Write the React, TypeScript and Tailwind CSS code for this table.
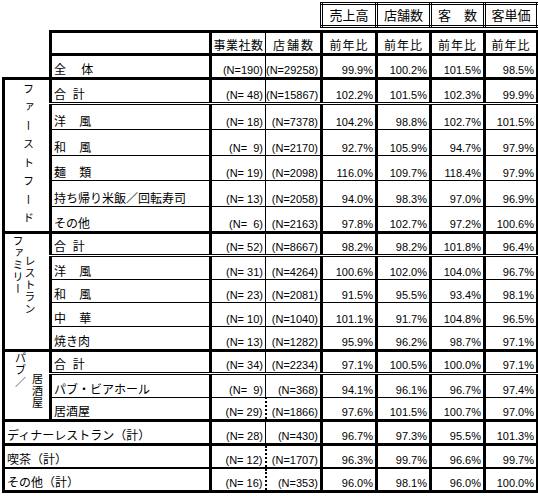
type Row = {
  label: string;
  n: string;
  s: string;
  p: [string, string, string, string];
  b: "thin" | "double" | "thick" | "mid";
  dot?: boolean;
};

const B = {
  thin: "border-b",
  double: "border-b-[3px] [border-bottom-style:double]",
  thick: "border-b-[3px]",
  mid: "border-b-2",
};

const fastFood: Row[] = [
  { label: "合  計", n: "(N= 48)", s: "(N=15867)", p: ["102.2%", "101.5%", "102.3%", "99.9%"], b: "double" },
  { label: "洋    風", n: "(N= 18)", s: "(N=7378)", p: ["104.2%", "98.8%", "102.7%", "101.5%"], b: "thin" },
  { label: "和    風", n: "(N=  9)", s: "(N=2170)", p: ["92.7%", "105.9%", "94.7%", "97.9%"], b: "thin" },
  { label: "麺    類", n: "(N= 19)", s: "(N=2098)", p: ["116.0%", "109.7%", "118.4%", "97.9%"], b: "thin" },
  { label: "持ち帰り米飯／回転寿司", n: "(N= 13)", s: "(N=2058)", p: ["94.0%", "98.3%", "97.0%", "96.9%"], b: "thin" },
  { label: "その他", n: "(N=  6)", s: "(N=2163)", p: ["97.8%", "102.7%", "97.2%", "100.6%"], b: "thick" },
];

const family: Row[] = [
  { label: "合  計", n: "(N= 52)", s: "(N=8667)", p: ["98.2%", "98.2%", "101.8%", "96.4%"], b: "double" },
  { label: "洋    風", n: "(N= 31)", s: "(N=4264)", p: ["100.6%", "102.0%", "104.0%", "96.7%"], b: "thin" },
  { label: "和    風", n: "(N= 23)", s: "(N=2081)", p: ["91.5%", "95.5%", "93.4%", "98.1%"], b: "thin" },
  { label: "中    華", n: "(N= 10)", s: "(N=1040)", p: ["101.1%", "91.7%", "104.8%", "96.5%"], b: "thin" },
  { label: "焼き肉", n: "(N= 13)", s: "(N=1282)", p: ["95.9%", "96.2%", "98.7%", "97.1%"], b: "thick" },
];

const pub: Row[] = [
  { label: "合  計", n: "(N= 34)", s: "(N=2234)", p: ["97.1%", "100.5%", "100.0%", "97.1%"], b: "double" },
  { label: "パブ・ビアホール", n: "(N=  9)", s: "(N=368)", p: ["94.1%", "96.1%", "96.7%", "97.4%"], b: "thin" },
  { label: "居酒屋", n: "(N= 29)", s: "(N=1866)", p: ["97.6%", "101.5%", "100.7%", "97.0%"], b: "thick", dot: true },
];

const others: Row[] = [
  { label: "ディナーレストラン（計）", n: "(N= 28)", s: "(N=430)", p: ["96.7%", "97.3%", "95.5%", "101.3%"], b: "thick" },
  { label: "喫茶（計）", n: "(N= 12)", s: "(N=1707)", p: ["96.3%", "99.7%", "96.6%", "99.7%"], b: "mid", dot: true },
  { label: "その他（計）", n: "(N= 16)", s: "(N=353)", p: ["96.0%", "98.1%", "96.0%", "100.0%"], b: "thick", dot: true },
];

const num = "text-right align-bottom pb-[1px] pr-[2px] whitespace-pre text-[11px] leading-none";

function Cells({ r, wide }: { r: Row; wide?: boolean }) {
  const b = B[r.b];
  return (
    <>
      <td
        colSpan={wide ? 2 : 1}
        className={`border-l-[3px] border-r-[3px] pl-[2px] pb-[1px] align-bottom text-left whitespace-pre text-[12px] leading-none ${b}`}
      >
        {r.label}
      </td>
      <td className={`${num} ${b} ${r.dot ? "border-r-2 [border-right-style:dotted]" : "border-r"}`}>{r.n}</td>
      <td className={`${num} ${b} border-r-[3px]`}>{r.s}</td>
      {r.p.map((v, i) => (
        <td key={i} className={`${num} ${b} border-r-[3px]`}>
          {v}
        </td>
      ))}
    </>
  );
}

const vert = "[writing-mode:vertical-rl] text-[11px] leading-none";
const rowH = "h-[23.6px]";

export default function App() {
  return (
    <div className="w-[538px] h-[498px] bg-white overflow-hidden pt-[2px] pl-[2px] text-black font-['Liberation_Sans','Noto_Sans_CJK_JP',sans-serif]">
      <table className="table-fixed border-collapse w-[534px]">
        <colgroup>
          <col className="w-[47px]" />
          <col className="w-[160px]" />
          <col className="w-[55px]" />
          <col className="w-[56px]" />
          <col className="w-[55px]" />
          <col className="w-[54px]" />
          <col className="w-[54px]" />
          <col className="w-[53px]" />
        </colgroup>
        <tbody>
          <tr className="h-[23px]">
            <td colSpan={4} />
            {["売上高", "店舗数", "客　数", "客単価"].map((t) => (
              <td key={t} className="border-[3px] border-double text-center align-middle text-[13px] leading-none whitespace-pre">
                {t}
              </td>
            ))}
          </tr>
          <tr className="h-[5px]">
            <td colSpan={8} />
          </tr>
          <tr className="h-[23px]">
            <td />
            <td className="border-[3px]" />
            <td className="border-t-[3px] border-b-[3px] border-r text-center align-bottom pb-[1px] text-[12px] leading-none tracking-[0.5px]">
              事業社数
            </td>
            <td className="border-t-[3px] border-b-[3px] border-r-[3px] text-center align-bottom pb-[1px] text-[12px] leading-none tracking-[2px] pl-[2px]">
              店舗数
            </td>
            {[0, 1, 2, 3].map((i) => (
              <td key={i} className="border-t-[3px] border-b-[3px] border-r-[3px] text-center align-bottom pb-[1px] text-[12px] leading-none tracking-[1px]">
                前年比
              </td>
            ))}
          </tr>
          <tr className={rowH}>
            <td />
            <Cells r={{ label: "全　 体", n: "(N=190)", s: "(N=29258)", p: ["99.9%", "100.2%", "101.5%", "98.5%"], b: "thick" }} />
          </tr>
          {fastFood.map((r, i) => (
            <tr key={r.label + i} className={rowH}>
              {i === 0 && (
                <td rowSpan={fastFood.length} className="border-[3px] align-top">
                  <div className="flex justify-center pt-[3px]">
                    <span className={`${vert} tracking-[7.5px]`}>ファーストフード</span>
                  </div>
                </td>
              )}
              <Cells r={r} />
            </tr>
          ))}
          {family.map((r, i) => (
            <tr key={r.label + i} className={rowH}>
              {i === 0 && (
                <td rowSpan={family.length} className="border-[3px] align-top">
                  <div className="flex gap-[1px] pl-[6px] pt-[1px]">
                    <span className={`${vert} tracking-[1px]`}>ファミリー</span>
                    <span className={`${vert} tracking-[1px] mt-[20px]`}>レストラン</span>
                  </div>
                </td>
              )}
              <Cells r={r} />
            </tr>
          ))}
          {pub.map((r, i) => (
            <tr key={r.label + i} className={rowH}>
              {i === 0 && (
                <td rowSpan={pub.length} className="border-[3px] align-top">
                  <div className="flex gap-[6px] pl-[10px] text-[11px] leading-[12px]">
                    <div className="flex flex-col">
                      <span>パ</span>
                      <span>ブ</span>
                      <span>／</span>
                    </div>
                    <div className="flex flex-col mt-[21px]">
                      <span>居</span>
                      <span>酒</span>
                      <span>屋</span>
                    </div>
                  </div>
                </td>
              )}
              <Cells r={r} />
            </tr>
          ))}
          {others.map((r) => (
            <tr key={r.label} className={rowH}>
              <Cells r={r} wide />
            </tr>
          ))}
        </tbody>
      </table>
    </div>
  );
}
